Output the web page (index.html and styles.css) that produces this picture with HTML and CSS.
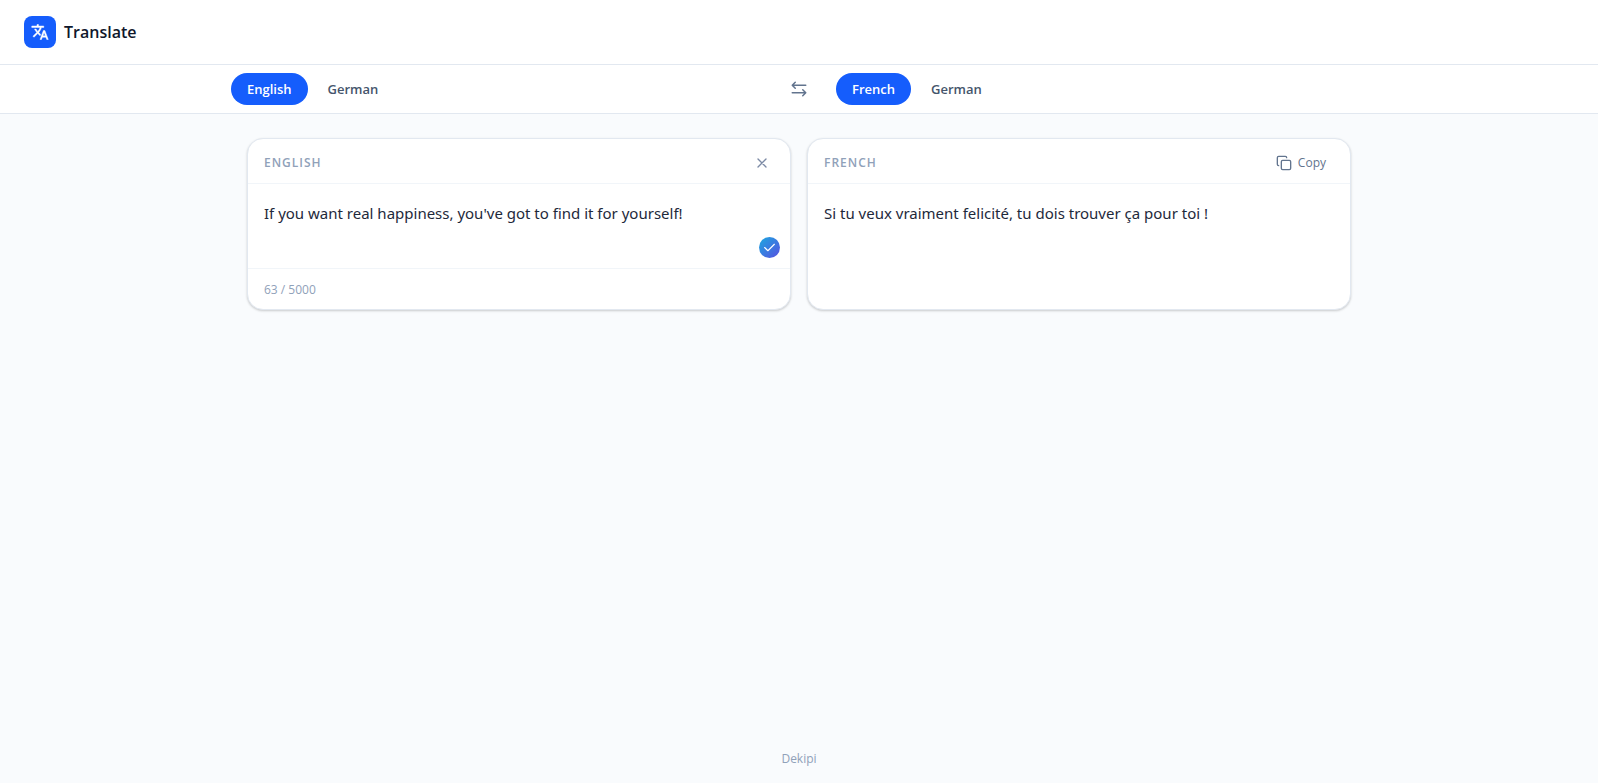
FILE: index.html
```html
<!DOCTYPE html>
<html lang="en">
<head>
<meta charset="utf-8">
<meta name="viewport" content="width=device-width, initial-scale=1">
<title>Translate</title>
<link rel="stylesheet" href="styles.css">
</head>
<body>
<header class="topbar">
  <span class="logo">
    <svg width="18" height="18" viewBox="0 0 24 24" fill="currentColor" stroke="currentColor" stroke-width="0.600" aria-hidden="true"><path d="M12.87 15.07l-2.54-2.51.03-.03c1.74-1.94 2.98-4.17 3.71-6.53H17V4h-7V2H8v2H1v2h11.17C11.5 7.92 10.44 9.75 9 11.35 8.07 10.32 7.3 9.19 6.69 8h-2c.73 1.63 1.73 3.17 2.98 4.56l-5.09 5.02L4 19l5-5 3.11 3.11.76-2.04zM18.5 10h-2L12 22h2l1.12-3h4.75L21 22h2l-4.5-12zm-2.62 7l1.62-4.33L19.12 17h-3.24z"/></svg>
  </span>
  <h1 class="title">Translate</h1>
</header>
<nav class="langbar" aria-label="Languages">
  <div class="langs">
    <div class="group">
      <button class="pill active" type="button">English</button>
      <button class="pill" type="button">German</button>
    </div>
    <button class="swap" type="button" aria-label="Swap languages">
      <svg class="icon" width="18" height="18" viewBox="0 0 24 24" aria-hidden="true"><path d="M7 3 3 7l4 4M3 7h18M17 13l4 4-4 4M21 17H3"/></svg>
    </button>
    <div class="group">
      <button class="pill active" type="button">French</button>
      <button class="pill" type="button">German</button>
    </div>
  </div>
</nav>
<main class="panels">
  <section class="card">
    <div class="card-head">
      <label class="card-label" for="source">English</label>
      <button class="clear" type="button" aria-label="Clear">
        <svg class="icon" width="16" height="16" viewBox="0 0 24 24" aria-hidden="true"><path d="M18 6 6 18M6 6l12 12"/></svg>
      </button>
    </div>
    <div class="field">
      <textarea class="text" id="source" rows="1" spellcheck="false">If you want real happiness, you've got to find it for yourself!</textarea>
      <span class="badge">
        <svg class="icon" width="13" height="13" viewBox="0 0 24 24" aria-hidden="true"><path d="m3 12 6 6L21 6"/></svg>
      </span>
    </div>
    <div class="card-foot">63 / 5000</div>
  </section>
  <section class="card">
    <div class="card-head">
      <h2 class="card-label">French</h2>
      <button class="copy" type="button">
        <svg class="icon" width="16" height="16" viewBox="0 0 24 24" aria-hidden="true"><rect x="8" y="8" width="14" height="14" rx="2"/><path d="M4 16a2 2 0 0 1-2-2V4a2 2 0 0 1 2-2h10a2 2 0 0 1 2 2"/></svg>
        Copy
      </button>
    </div>
    <p class="text result">Si tu veux vraiment felicité, tu dois trouver ça pour toi !</p>
  </section>
</main>
<footer class="footer">Dekipi</footer>
</body>
</html>
```

FILE: styles.css
```css
*, *::before, *::after { box-sizing: border-box; }

body {
  margin: 0;
  min-height: 100vh;
  display: flex;
  flex-direction: column;
  background: #f9fbfd;
  color: #1e293b;
  font-family: "Open Sans", "Noto Sans", sans-serif;
}

h1, h2, p { margin: 0; }

button {
  border: 0;
  background: none;
  padding: 0;
  font: inherit;
  color: #62748e;
  cursor: pointer;
}

.icon {
  display: block;
  fill: none;
  stroke: currentColor;
  stroke-width: 2;
  stroke-linecap: round;
  stroke-linejoin: round;
}

.topbar {
  display: flex;
  align-items: center;
  gap: 8px;
  padding: 16px 24px;
  background: #fff;
  border-bottom: 1px solid #e2e8f0;
}

.logo {
  display: grid;
  place-items: center;
  width: 32px;
  height: 32px;
  border-radius: 8px;
  background: #155dfc;
  color: #fff;
}

.title {
  font-size: 16px;
  line-height: 28px;
  font-weight: 600;
  color: #0f172b;
}

.langbar {
  background: #fff;
  border-bottom: 1px solid #e2e8f0;
}

.langs {
  display: flex;
  align-items: center;
  max-width: 1152px;
  margin: 0 auto;
  padding: 8px;
}

.group {
  flex: 1;
  display: flex;
  gap: 4px;
}

.pill {
  padding: 6px 16px;
  border-radius: 16px;
  font-size: 13px;
  line-height: 20px;
  font-weight: 600;
  color: #45556c;
}

.pill.active {
  background: #155dfc;
  color: #fff;
}

.swap {
  margin: 0 20px;
  padding: 7px 8px;
}

.panels {
  flex: 1;
  display: grid;
  grid-template-columns: 1fr 1fr;
  align-items: start;
  gap: 16px;
  width: 100%;
  max-width: 1152px;
  margin: 0 auto;
  padding: 24px;
}

.card {
  background: #fff;
  border: 1px solid #e2e8f0;
  border-radius: 16px;
  box-shadow: 0 1px 3px rgb(0 0 0 / 10%), 0 1px 2px rgb(0 0 0 / 10%);
}

.card-head {
  display: flex;
  align-items: center;
  justify-content: space-between;
  padding: 10px 16px 6px;
  border-bottom: 1px solid #f1f5f9;
}

.card-label {
  font-size: 12px;
  line-height: 16px;
  font-weight: 600;
  letter-spacing: 1px;
  text-transform: uppercase;
  color: #90a1b9;
}

.clear {
  padding: 6px 4px;
  color: #7c8aa5;
}

.copy {
  display: flex;
  align-items: center;
  gap: 6px;
  padding: 6px 8px;
  font-size: 12px;
  line-height: 16px;
}

.field {
  position: relative;
  display: flex;
}

.text {
  width: 100%;
  min-height: 84px;
  padding: 16px;
  font-family: "Noto Sans", sans-serif;
  font-size: 15px;
  line-height: 26px;
}

textarea.text {
  display: block;
  border: 0;
  outline: 0;
  resize: none;
  background: none;
  color: inherit;
}

.result { min-height: 125px; }

.badge {
  position: absolute;
  right: 10px;
  bottom: 10px;
  display: grid;
  place-items: center;
  width: 21px;
  height: 21px;
  border-radius: 50%;
  background: linear-gradient(135deg, #1ba8e0, #5850e0);
  color: #fff;
}

.card-foot {
  padding: 13px 16px 11px;
  border-top: 1px solid #f1f5f9;
  font-size: 12px;
  line-height: 16px;
  color: #90a1b9;
}

.footer {
  padding: 16px;
  text-align: center;
  font-size: 12px;
  line-height: 16px;
  color: #90a1b9;
}
```
